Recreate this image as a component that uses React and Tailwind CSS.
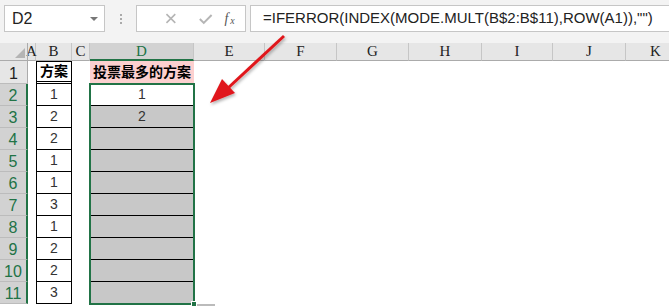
import React from 'react';

const cols = [
  { key: 'A', w: 8 },
  { key: 'B', w: 36 },
  { key: 'C', w: 18 },
  { key: 'D', w: 104 },
  { key: 'E', w: 71 },
  { key: 'F', w: 72 },
  { key: 'G', w: 72 },
  { key: 'H', w: 73 },
  { key: 'I', w: 71 },
  { key: 'J', w: 73 },
  { key: 'K', w: 60 },
];

const votes = [1, 2, 2, 1, 1, 3, 1, 2, 2, 3];

function Toolbar() {
  return (
    <div className="flex h-[43px] items-start bg-[#f3f3f3] pt-[5px] pl-[4px]">
      <div className="flex h-[27px] w-[101px] items-center justify-between border border-[#c6c6c6] bg-white pl-[7px] pr-[6px]">
        <span className="text-[16px] text-[#222]" style={{ fontFamily: '"Liberation Sans", Arial, sans-serif' }}>D2</span>
        <span className="h-0 w-0 border-x-[4px] border-t-[4px] border-x-transparent border-t-[#777]" />
      </div>
      <div className="flex h-[27px] w-[31px] flex-col items-center justify-center gap-[2px]">
        <span className="h-[2px] w-[2px] bg-[#aaa]" />
        <span className="h-[2px] w-[2px] bg-[#aaa]" />
        <span className="h-[2px] w-[2px] bg-[#aaa]" />
      </div>
      <div className="flex h-[27px] w-[110px] items-center border border-[#c6c6c6] bg-white">
        <svg width="110" height="27" viewBox="0 0 110 27">
          <path d="M30 9l9 9M39 9l-9 9" stroke="#b5b5b5" strokeWidth="1.6" />
          <path d="M64 14l4 4l8 -8" stroke="#b5b5b5" strokeWidth="2" fill="none" />
          <text x="89" y="18" fontSize="14" fontStyle="italic" fontFamily='"Liberation Serif", serif' fill="#555">f</text>
          <text x="95" y="19" fontSize="10" fontStyle="italic" fontFamily='"Liberation Serif", serif' fill="#555">x</text>
        </svg>
      </div>
      <div className="ml-[4px] flex h-[27px] flex-1 items-center border border-r-0 border-[#c6c6c6] bg-white pl-[12px]">
        <span className="whitespace-nowrap text-[15px] text-[#222]" style={{ fontFamily: '"Liberation Sans", Arial, sans-serif' }}>
          =IFERROR(INDEX(MODE.MULT(B$2:B$11),ROW(A1)),"")
        </span>
      </div>
    </div>
  );
}

function HeaderRow() {
  return (
    <div className="flex h-[18px] bg-[#e6e6e6]">
      <div className="relative w-[28px] shrink-0 border-b border-r border-[#ababab]">
        <span className="absolute bottom-[2px] right-[2px] h-0 w-0 border-b-[10px] border-l-[10px] border-b-[#b4b4b4] border-l-transparent" />
      </div>
      {cols.map((c) => {
        const sel = c.key === 'D';
        return (
          <div
            key={c.key}
            className={
              sel
                ? 'flex shrink-0 items-center justify-center border-b-2 border-r border-b-[#217346] border-r-[#c6c6c6] bg-[#d2d2d2] text-[#217346]'
                : 'flex shrink-0 items-center justify-center border-b border-r border-b-[#ababab] border-r-[#c6c6c6] text-[#222]'
            }
            style={{ width: c.w, fontFamily: '"Liberation Serif", "DejaVu Serif", serif' }}
          >
            <span className="text-[15px] leading-none">{c.key}</span>
          </div>
        );
      })}
    </div>
  );
}

function Row({ n, h, children }) {
  const sel = n >= 2;
  return (
    <div className="flex" style={{ height: h }}>
      <div
        className={
          sel
            ? 'flex w-[28px] shrink-0 items-end justify-center border-b border-r-2 border-b-[#bcbcbc] border-r-[#217346] bg-[#d2d2d2] text-[#217346]'
            : 'flex w-[28px] shrink-0 items-end justify-center border-b border-r border-b-[#bcbcbc] border-r-[#ababab] bg-[#e6e6e6] text-[#222]'
        }
        style={{ fontFamily: '"Liberation Sans", Arial, sans-serif' }}
      >
        <span className="text-[16px] leading-[19px]">{n}</span>
      </div>
      {children}
    </div>
  );
}

const cellFont = { fontFamily: '"Liberation Sans", Arial, "Noto Sans CJK SC", sans-serif' };

export default function App() {
  return (
    <div className="relative h-[307px] w-[669px] overflow-hidden bg-white">
      <Toolbar />
      <HeaderRow />
      <Row n={1} h={23}>
        <div className="w-[8px] shrink-0" />
        <div className="flex w-[36px] shrink-0 items-center justify-center border-x border-t border-b-[3px] border-black [border-bottom-style:double] text-[14px] font-bold text-black" style={cellFont}>
          方案
        </div>
        <div className="w-[18px] shrink-0" />
        <div className="flex w-[104px] shrink-0 items-center justify-center bg-[#fcd0cf] text-[14px] font-bold text-black" style={cellFont}>
          投票最多的方案
        </div>
      </Row>
      <div className="relative">
        {votes.map((v, i) => (
          <Row key={i} n={i + 2} h={22}>
            <div className="w-[8px] shrink-0" />
            <div className="flex w-[36px] shrink-0 items-center justify-center border-x border-b border-black text-[14px] text-[#333]" style={cellFont}>
              {v}
            </div>
            <div className="w-[18px] shrink-0" />
            <div
              className={
                i === 0
                  ? 'flex w-[104px] shrink-0 items-center justify-center border-b border-black bg-white text-[14px] text-[#333]'
                  : 'flex w-[104px] shrink-0 items-center justify-center border-b border-black bg-[#c8c8c8] text-[14px] text-[#333]'
              }
              style={cellFont}
            >
              {i === 0 ? '1' : i === 1 ? '2' : ''}
            </div>
          </Row>
        ))}
        <div className="pointer-events-none absolute left-[89px] top-[-1px] h-[222px] w-[106px] border-2 border-[#217346]" />
        <div className="absolute left-[191px] top-[217px] h-[6px] w-[6px] border border-white bg-[#217346]" />
      </div>
      <div className="ml-[197px] h-[2px] w-[18px] bg-[#bbb]" />
      <svg className="pointer-events-none absolute left-0 top-0" width="669" height="307" viewBox="0 0 669 307">
        <defs>
          <filter id="sh" x="-20%" y="-20%" width="140%" height="140%">
            <feDropShadow dx="1" dy="2" stdDeviation="1.5" floodColor="#000" floodOpacity="0.3" />
          </filter>
        </defs>
        <g filter="url(#sh)">
          <line x1="284" y1="36" x2="228" y2="88" stroke="#e0191b" strokeWidth="3" />
          <polygon points="210,103 222,79 235,93" fill="#e0191b" />
        </g>
      </svg>
    </div>
  );
}
